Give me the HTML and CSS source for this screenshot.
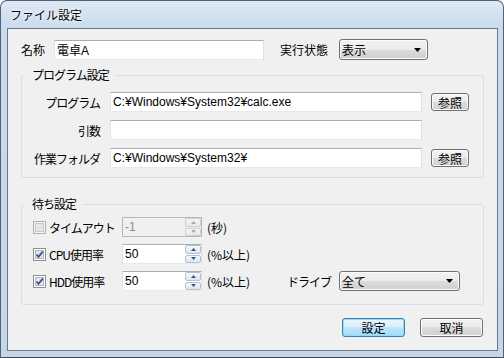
FILE: index.html
```html
<!DOCTYPE html>
<html lang="ja">
<head>
  <meta charset="UTF-8">
  <title>ファイル設定</title>
  <link rel="stylesheet" href="styles.css">
</head>
<body>
  <div class="window">
    <div class="titlebar">ファイル設定</div>

    <div class="client">
      <div class="top-row">
        <span class="name-label">名称</span>
        <input class="field name-field" type="text" value="電卓A">
        <span class="state-label">実行状態</span>
        <div class="combo state-combo">
          <span>表示</span>
          <svg width="7" height="4" viewBox="0 0 7 4"><polygon points="0,0 7,0 3.5,4" fill="#000"/></svg>
        </div>
      </div>

      <div class="group program-group">
        <div class="group-title">プログラム設定</div>
        <div class="prog-row">
          <span class="prog-label">プログラム</span>
          <input class="field path-field" type="text" value="C:¥Windows¥System32¥calc.exe">
          <button class="btn ref-btn">参照</button>
        </div>
        <div class="prog-row">
          <span class="prog-label">引数</span>
          <input class="field path-field" type="text" value="">
        </div>
        <div class="prog-row">
          <span class="prog-label">作業フォルダ</span>
          <input class="field path-field" type="text" value="C:¥Windows¥System32¥">
          <button class="btn ref-btn">参照</button>
        </div>
      </div>

      <div class="group wait-group">
        <div class="group-title">待ち設定</div>

        <div class="wait-row">
          <svg class="check" width="13" height="13" viewBox="0 0 13 13">
            <rect x="0.5" y="0.5" width="12" height="12" fill="#f4f4f4" stroke="#b1b1b1"/>
            <rect x="2.5" y="2.5" width="8" height="8" fill="#e6e6e6" stroke="#c9c9c9"/>
          </svg>
          <span class="wait-label">タイムアウト</span>
          <div class="spin disabled">
            <input class="spin-input" type="text" value="-1" disabled>
            <div class="spin-btns">
              <div class="spin-btn"><svg width="5" height="3" viewBox="0 0 5 3"><polygon points="0,3 5,3 2.5,0"/></svg></div>
              <div class="spin-btn"><svg width="5" height="3" viewBox="0 0 5 3"><polygon points="0,0 5,0 2.5,3"/></svg></div>
            </div>
          </div>
          <span class="unit">(秒)</span>
        </div>

        <div class="wait-row">
          <svg class="check" width="13" height="13" viewBox="0 0 13 13">
            <rect x="0.5" y="0.5" width="12" height="12" fill="#fff" stroke="#8e8f8f"/>
            <rect x="2.5" y="2.5" width="8" height="8" fill="#e4e6ea" stroke="#b4b8be"/>
            <path d="M3.5 6.5 L5.5 8.8 L9.8 3.6" fill="none" stroke="#3e5595" stroke-width="1.8"/>
          </svg>
          <span class="wait-label">CPU使用率</span>
          <div class="spin">
            <input class="spin-input" type="text" value="50">
            <div class="spin-btns">
              <div class="spin-btn"><svg width="5" height="3" viewBox="0 0 5 3"><polygon points="0,3 5,3 2.5,0"/></svg></div>
              <div class="spin-btn"><svg width="5" height="3" viewBox="0 0 5 3"><polygon points="0,0 5,0 2.5,3"/></svg></div>
            </div>
          </div>
          <span class="unit">(%以上)</span>
        </div>

        <div class="wait-row">
          <svg class="check" width="13" height="13" viewBox="0 0 13 13">
            <rect x="0.5" y="0.5" width="12" height="12" fill="#fff" stroke="#8e8f8f"/>
            <rect x="2.5" y="2.5" width="8" height="8" fill="#e4e6ea" stroke="#b4b8be"/>
            <path d="M3.5 6.5 L5.5 8.8 L9.8 3.6" fill="none" stroke="#3e5595" stroke-width="1.8"/>
          </svg>
          <span class="wait-label">HDD使用率</span>
          <div class="spin">
            <input class="spin-input" type="text" value="50">
            <div class="spin-btns">
              <div class="spin-btn"><svg width="5" height="3" viewBox="0 0 5 3"><polygon points="0,3 5,3 2.5,0"/></svg></div>
              <div class="spin-btn"><svg width="5" height="3" viewBox="0 0 5 3"><polygon points="0,0 5,0 2.5,3"/></svg></div>
            </div>
          </div>
          <span class="unit">(%以上)</span>
          <span class="drive-label">ドライブ</span>
          <div class="combo drive-combo">
            <span>全て</span>
            <svg width="7" height="4" viewBox="0 0 7 4"><polygon points="0,0 7,0 3.5,4" fill="#000"/></svg>
          </div>
        </div>
      </div>

      <div class="actions">
        <button class="btn default-btn">設定</button>
        <button class="btn">取消</button>
      </div>
    </div>
  </div>
</body>
</html>
```

FILE: styles.css
```css
* { margin: 0; padding: 0; box-sizing: border-box; }

body {
  width: 504px;
  height: 358px;
  overflow: hidden;
  background: #fff;
  font-family: "Noto Sans CJK JP", "Liberation Sans", sans-serif;
  font-size: 12px;
  color: #000;
}

.window {
  width: 504px;
  height: 358px;
  display: flex;
  flex-direction: column;
  padding: 0 5px 6px 6px;
  border: 1px solid #56616d;
  border-bottom-color: #3d4854;
  border-radius: 7px 7px 0 0;
  background: linear-gradient(#dce8f4 0, #c9dbee 27px, #c3d6ea 100%);
}

.titlebar {
  height: 27px;
  display: flex;
  align-items: center;
  padding-left: 3px;
  line-height: 14px;
  text-shadow: 0 0 6px #fff, 0 0 3px #fff;
}

.client {
  flex: 1;
  border: 1px solid #6c7885;
  background: #f0f0f0;
  padding: 10px 13px 0;
}

/* inputs */
.field {
  height: 20px;
  padding: 0 2px;
  border: 1px solid;
  border-color: #abadb3 #dbdfe6 #e3e9ef #e2e3ea;
  background: #fff;
  font-family: "Liberation Sans", "Noto Sans CJK JP", sans-serif;
  font-size: 12px;
  color: #000;
  outline: none;
}

.combo {
  height: 21px;
  display: flex;
  align-items: center;
  justify-content: space-between;
  padding: 0 6px 0 2px;
  border: 1px solid #707070;
  border-radius: 3px;
  background: linear-gradient(#f2f2f2 0, #ebebeb 50%, #dddddd 50%, #cfcfcf 100%);
  box-shadow: inset 0 0 0 1px #fcfcfc;
}

.btn {
  height: 19px;
  border: 1px solid #707070;
  border-radius: 3px;
  background: linear-gradient(#f2f2f2 0, #ebebeb 50%, #dddddd 50%, #cfcfcf 100%);
  box-shadow: inset 0 0 0 1px #fcfcfc;
  font: inherit;
  line-height: 15px;
  color: #000;
}

/* top row */
.top-row {
  display: flex;
  align-items: center;
  height: 21px;
}

.name-label { width: 33px; }
.name-field { width: 210px; }
.state-label { width: 59px; margin-left: 16px; }
.state-combo { width: 89px; }

/* groups */
.group {
  position: relative;
  border: 1px solid #d5dfe5;
  border-radius: 3px;
  display: flex;
  flex-direction: column;
}

.group-title {
  position: absolute;
  top: -8px;
  left: 3px;
  padding: 0 7px;
  line-height: 14px;
  letter-spacing: -1px;
  background: #f0f0f0;
}

.program-group {
  margin-top: 15px;
  padding: 16px 0 9px;
  gap: 8px;
}

.prog-row {
  display: flex;
  align-items: center;
  height: 20px;
}

.prog-label {
  width: 78px;
  margin-right: 10px;
  text-align: right;
  letter-spacing: -1px;
}

.path-field { width: 312px; }

.ref-btn {
  width: 38px;
  height: 18px;
  margin-left: 9px;
}

.wait-group {
  margin-top: 26px;
  padding: 12px 0 13px 11px;
  gap: 7px;
}

.wait-row {
  display: flex;
  align-items: center;
  height: 20px;
}

.check { margin-right: 3px; flex-shrink: 0; }
.wait-label { width: 73px; letter-spacing: -1px; }

.spin {
  width: 80px;
  height: 20px;
  display: flex;
  border: 1px solid;
  border-color: #abadb3 #dbdfe6 #e3e9ef #e2e3ea;
  background: #fff;
}

.spin-input {
  width: 62px;
  border: none;
  padding: 0 2px;
  background: transparent;
  font-family: "Liberation Sans", "Noto Sans CJK JP", sans-serif;
  font-size: 12px;
  color: #000;
  outline: none;
}

.spin-btns {
  width: 16px;
  display: flex;
  flex-direction: column;
  gap: 1px;
}

.spin-btn {
  flex: 1;
  display: flex;
  align-items: center;
  justify-content: center;
  border: 1px solid #b6c2d1;
  border-radius: 2px;
  background: linear-gradient(#f5f8fb, #dbe5f0);
}

.spin-btn polygon { fill: #3f5486; }

.spin.disabled {
  border-color: #b5b9bd;
  background: #f0f0f0;
}

.spin.disabled .spin-input { color: #8d8d8d; }

.spin.disabled .spin-btn {
  border-color: #cfcfcf;
  background: linear-gradient(#f6f6f6, #e8e8e8);
}

.spin.disabled .spin-btn polygon { fill: #a8a8a8; }

.unit { margin-left: 5px; width: 80px; }
.drive-label { width: 52px; letter-spacing: -1px; }
.drive-combo { width: 121px; height: 20px; }

/* bottom buttons */
.actions {
  display: flex;
  justify-content: flex-end;
  gap: 15px;
  margin-top: 13px;
  padding-right: 1px;
}

.actions .btn { width: 63px; }

.default-btn {
  border-color: #3c7fb1;
  background: linear-gradient(#eaf6fd 0, #d9f0fc 50%, #bee6fd 50%, #a7d9f5 100%);
  box-shadow: inset 0 0 0 1px #8fdcfb;
}
```
